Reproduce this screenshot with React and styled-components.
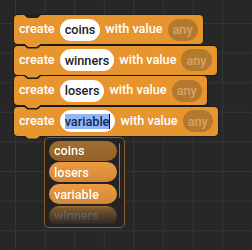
import React from "react";
import styled, { createGlobalStyle } from "styled-components";

const Global = createGlobalStyle`
  html, body { margin: 0; padding: 0; background: #262626; }
  #root { min-height: 100vh; }
`;

const Canvas = styled.div`
  min-height: 100vh;
  box-sizing: border-box;
  padding: 15px 0 0 14px;
  background-color: #272727;
  background-image:
    linear-gradient(to right, #353535 1px, transparent 1px),
    linear-gradient(to bottom, #353535 1px, transparent 1px);
  background-size: 29.6px 29.6px;
  background-position: 15px 23px;
  font-family: Roboto, "Liberation Sans", sans-serif;
`;

const Stack = styled.div`
  display: flex;
  flex-direction: column;
  align-items: flex-start;
  gap: 1.5px;
`;

const ORANGE = "#e7952f";
const OUTLINE = "#1b1b1b";
const FS = "12.7px";

const Block = styled.div`
  position: relative;
  display: flex;
  align-items: center;
  gap: 5px;
  height: 29px;
  padding: 0 5px;
  background: ${ORANGE};
  border-radius: 4px;
  box-shadow: 0 0 0 1px ${OUTLINE};
  font-weight: 500;
  font-size: ${FS};
  color: #fff;
  white-space: nowrap;

  &::before {
    content: "";
    position: absolute;
    top: -1px;
    left: 9px;
    width: 19px;
    height: 4px;
    background: ${(p) => (p.$first ? "#202020" : OUTLINE)};
    clip-path: polygon(0 0, 100% 0, 77% 100%, 23% 100%);
  }

  &::after {
    content: "";
    position: absolute;
    top: 100%;
    left: 10.5px;
    width: 16px;
    height: 3px;
    background: ${ORANGE};
    clip-path: polygon(0 0, 100% 0, 76% 100%, 24% 100%);
    z-index: 1;
  }
`;

const Label = styled.span`
  line-height: 1;
`;

const Pill = styled.span`
  display: inline-flex;
  align-items: center;
  height: 22px;
  padding: 0 5px;
  border-radius: 11px;
  background: ${(p) => (p.$any ? "#b37a2e" : "#ffffff")};
  color: ${(p) => (p.$any ? "#d5a466" : "#1c1c1c")};
  font-weight: 500;
  font-size: ${FS};
`;

const Selected = styled.span`
  background: #94b5f3;
  color: #10285e;
  line-height: 15px;
`;

const Caret = styled.span`
  display: inline-block;
  width: 1px;
  height: 15px;
  background: #111;
`;

const Dropdown = styled.div`
  position: absolute;
  top: calc(100% + 1.2px);
  left: 30px;
  width: 81px;
  height: 91px;
  box-sizing: border-box;
  padding: 3px 4px 3px 4px;
  border: 1px solid #8c5d27;
  border-radius: 5px;
  background: #232323;
  display: flex;
  gap: 1.5px;
  z-index: 2;
`;

const List = styled.div`
  flex: 1;
  display: flex;
  flex-direction: column;
  gap: 1.7px;
  overflow: hidden;
  -webkit-mask-image: linear-gradient(
    to bottom,
    #000 0,
    #000 62px,
    rgba(0, 0, 0, 0.45) 67px,
    rgba(0, 0, 0, 0.08) 83px
  );
  mask-image: linear-gradient(
    to bottom,
    #000 0,
    #000 62px,
    rgba(0, 0, 0, 0.45) 67px,
    rgba(0, 0, 0, 0.08) 83px
  );
`;

const Item = styled.div`
  flex: none;
  display: flex;
  align-items: center;
  height: 20px;
  padding-left: 5px;
  border-radius: 10px;
  background: ${(p) =>
    p.$active
      ? "linear-gradient(#a06c30, #94622a)"
      : "linear-gradient(#eb9d40, #d4873a)"};
  color: #fff;
  font-weight: 500;
  font-size: ${FS};
`;

const Thumb = styled.div`
  flex: none;
  width: 1.5px;
  height: 55px;
  margin-top: 2px;
  border-radius: 1px;
  background: #7a7a7a;
`;

const blocks = ["coins", "winners", "losers"];

export default function App() {
  return (
    <Canvas>
      <Global />
      <Stack>
        {blocks.map((name, i) => (
          <Block key={name} $first={i === 0}>
            <Label>create</Label>
            <Pill>{name}</Pill>
            <Label>with value</Label>
            <Pill $any>any</Pill>
          </Block>
        ))}
        <Block>
          <Label>create</Label>
          <Pill>
            <Selected>variable</Selected>
            <Caret />
          </Pill>
          <Label>with value</Label>
          <Pill $any>any</Pill>
          <Dropdown>
            <List>
              <Item $active>coins</Item>
              <Item>losers</Item>
              <Item>variable</Item>
              <Item>winners</Item>
            </List>
            <Thumb />
          </Dropdown>
        </Block>
      </Stack>
    </Canvas>
  );
}
